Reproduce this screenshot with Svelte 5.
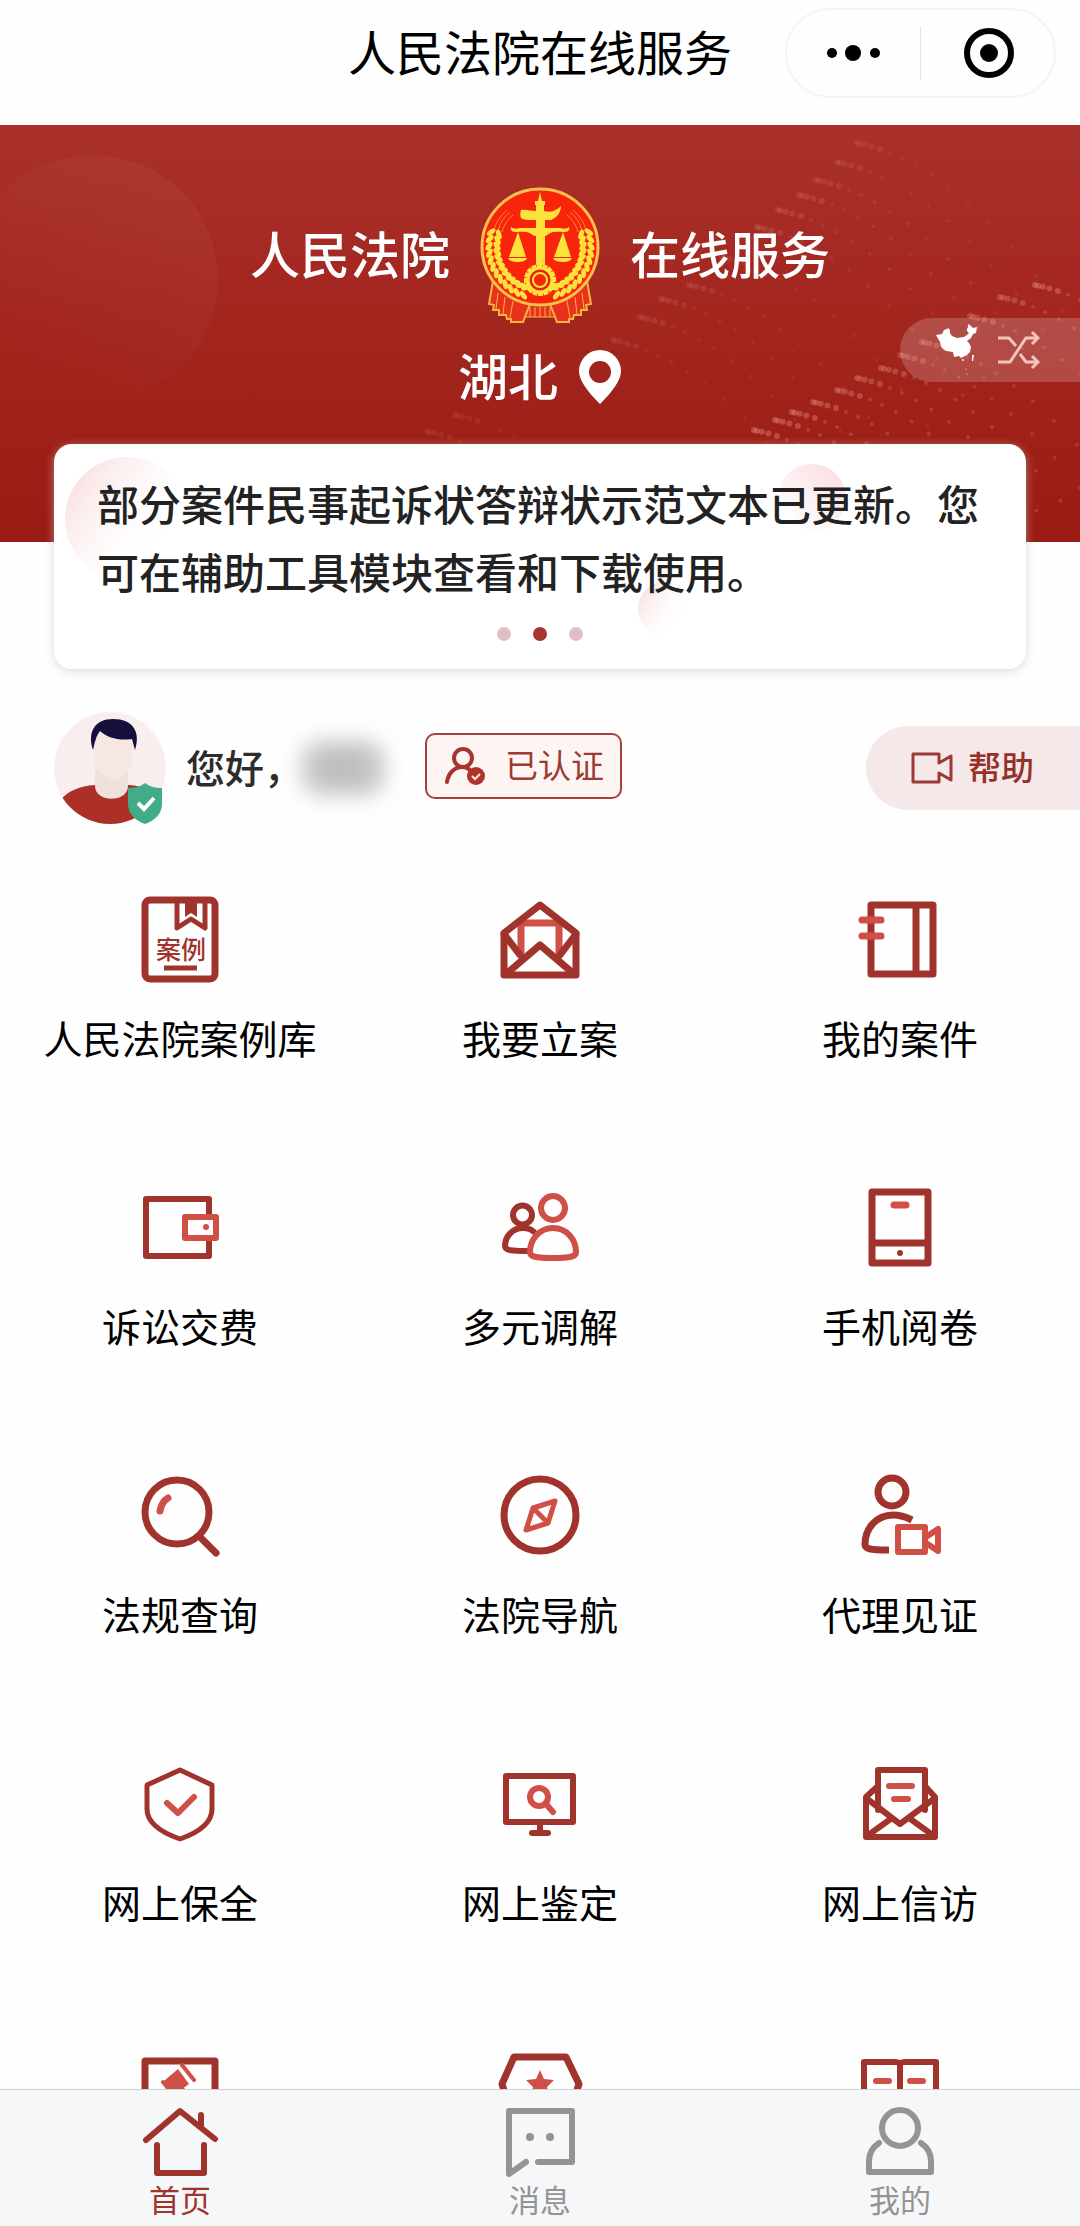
<script>
    let activeTab = 'home';
    let activeSlide = 1;

    // tone: dark strokes by default, 'light' for the accent strokes
    // solid: filled shape, back: white fill that hides what is underneath
    const services = [
        {
            label: '人民法院案例库',
            text: '案例',
            parts: [
                { d: 'M14 4h60a5 5 0 0 1 5 5v69a5 5 0 0 1-5 5H14a5 5 0 0 1-5-5V9a5 5 0 0 1 5-5z', width: 7 },
                { d: 'M41 4v28l14-9 14 9V4', width: 5 },
                { d: 'M49 4h12v17l-6-4-6 4z', solid: true },
                { d: 'M28 72h33', width: 5, flat: true }
            ]
        },
        {
            label: '我要立案',
            parts: [
                { d: 'M25 58V27h38v31', tone: 'light', width: 7 },
                { d: 'M8 79V37L44 9l36 28v42z', width: 7 },
                { d: 'M8 38l16 21M80 38L64 59M10 78l34-29 34 29', width: 7 }
            ]
        },
        {
            label: '我的案件',
            parts: [
                { d: 'M15 9h62v69H15zM60 9v69', width: 7 },
                { d: 'M6 24h19M6 40h19', tone: 'light', width: 7 }
            ]
        },
        {
            label: '诉讼交费',
            parts: [
                { d: 'M10 15h63v57H10z', width: 6 },
                { d: 'M49 33h31v21H49z', tone: 'light', width: 6, back: true },
                { d: 'M67 43a3 3 0 1 0 6 0a3 3 0 1 0-6 0', tone: 'light', solid: true }
            ]
        },
        {
            label: '多元调解',
            parts: [
                { d: 'M17 31a9.500 9.500 0 1 0 19 0a9.500 9.500 0 1 0-19 0', width: 6 },
                { d: 'M27 44c-11 0-18 9-18 18 0 4 5 5 24 5', width: 6 },
                { d: 'M27 44c4 0 8 1 11 4', width: 6 },
                { d: 'M57 44c-14 0-23 12-23 24 0 5 6 6 23 6s23-1 23-6c0-12-9-24-23-24z', tone: 'light', width: 6, back: true },
                { d: 'M45 24a12 12 0 1 0 24 0a12 12 0 1 0-24 0', tone: 'light', width: 6 }
            ]
        },
        {
            label: '手机阅卷',
            parts: [
                { d: 'M16 8h56v71H16zM16 59h56', width: 7 },
                { d: 'M38 21h12', tone: 'light', width: 7 },
                { d: 'M41 69a3 3 0 1 0 6 0a3 3 0 1 0-6 0', solid: true }
            ]
        },
        {
            label: '法规查询',
            parts: [
                { d: 'M9 40a32 32 0 1 0 64 0a32 32 0 1 0-64 0M63 64l17 17', width: 7 },
                { d: 'M32 26c-5 3-7 7-8 13', tone: 'light', width: 7 }
            ]
        },
        {
            label: '法院导航',
            parts: [
                { d: 'M8 43a36 36 0 1 0 72 0a36 36 0 1 0-72 0', width: 7 },
                { d: 'M59 29l-22 7-7 22 22-7zM37 36l15 15', tone: 'light' }
            ]
        },
        {
            label: '代理见证',
            parts: [
                { d: 'M22 20a14 14 0 1 0 28 0a14 14 0 1 0-28 0', width: 7 },
                { d: 'M56 48c-6-3-12-5-19-5C20 43 9 57 9 72c0 5 4 6 24 6', width: 7, flat: true },
                { d: 'M42 55h27v25H42zM70 65l12-8v22l-12-8', tone: 'light', width: 6 }
            ]
        },
        {
            label: '网上保全',
            parts: [
                { d: 'M44 10l32 15v24c0 13-12 23-32 30C24 72 11 62 11 49V25z' },
                { d: 'M31 43l11 10 16-16', tone: 'light', width: 6 }
            ]
        },
        {
            label: '网上鉴定',
            parts: [
                { d: 'M10 16h67v46H10z', width: 6 },
                { d: 'M44 62v10M36 73h16', width: 6 },
                { d: 'M34 37a9 9 0 1 0 18 0a9 9 0 1 0-18 0M50 44l7 8', tone: 'light', width: 6 }
            ]
        },
        {
            label: '网上信访',
            parts: [
                { d: 'M22 50V10h47v40M22 26L10 37v40h69V37L69 26M10 38l34 26 35-26M11 76l25-18M78 76L53 58', width: 6 },
                { d: 'M33 26h23M38 39h14', tone: 'light', width: 6 }
            ]
        },
        {
            name: '司法拍卖',
            parts: [
                { d: 'M9 13h70v60H9z', width: 7 },
                { d: 'M42 21l11 15-15 11-10-14z', tone: 'light', solid: true },
                { d: 'M46 17l12 15M27 34l12 15', tone: 'light', width: 4 },
                { d: 'M46 42l14 16', tone: 'light', width: 6 }
            ]
        },
        {
            name: '律师服务',
            parts: [
                { d: 'M18 9h52l13 27-13 38H18L6 36z', width: 7 },
                { d: 'M44 22l4 9 10 1-7 7 2 10-9-5-9 5 2-10-7-7 10-1z', tone: 'light', solid: true }
            ]
        },
        {
            name: '法律文库',
            parts: [
                { d: 'M44 17c0-3-2-3-5-3H8v56h36zM44 17c0-3 2-3 5-3h31v56H44z', width: 6 },
                { d: 'M20 33h13M54 33h13', tone: 'light', width: 6 }
            ]
        }
    ];

    const tabs = [
        {
            id: 'home',
            label: '首页',
            line: 'M6 34L40 5l35 28M61 9v12M17 39v28h47V39',
            dots: ''
        },
        {
            id: 'message',
            label: '消息',
            line: 'M38 56h34V5H9v63l17-12',
            dots: 'M26 31a4 4 0 1 0 8 0a4 4 0 1 0-8 0M46 31a4 4 0 1 0 8 0a4 4 0 1 0-8 0'
        },
        {
            id: 'mine',
            label: '我的',
            line: 'M22 22a18 18 0 1 0 36 0a18 18 0 1 0-36 0M19 37c-6 4-10 10-10 18v11h62V55c0-8-4-14-10-18',
            dots: ''
        }
    ];

    const slides = [0, 1, 2];

    // starting points of the dotted waves on the banner
    const waves = [
        [427, 306, 0.12], [455, 290, 0.12], [613, 215, 0.14], [640, 192, 0.16],
        [661, 174, 0.16], [689, 160, 0.16], [722, 132, 0.14], [757, 102, 0.2],
        [778, 85, 0.2], [799, 70, 0.2], [816, 55, 0.18], [837, 37, 0.16],
        [857, 18, 0.14], [754, 305, 0.42], [775, 295, 0.4], [792, 287, 0.4],
        [813, 277, 0.38], [837, 265, 0.36], [857, 253, 0.34], [881, 243, 0.34],
        [900, 230, 0.3], [922, 217, 0.3], [970, 191, 0.34], [1000, 172, 0.34],
        [1035, 160, 0.4]
    ];

    const dots = waves.flatMap(([x, y, opacity]) => {
        const row = [];
        let dx = 0;
        for (let i = 0; i < 15; i++) {
            row.push({
                x: x + dx,
                y: y + dx * dx * 0.003 + dx * 0.2,
                r: i < 5 ? 3 : 2,
                opacity: i < 5 ? opacity : opacity * 0.7
            });
            dx += 3 + i * 1.8;
        }
        return row;
    });

    // wheat ears on both sides of the emblem
    const grains = [];
    for (let a = 0; a < 12; a++) {
        const angle = 197 - a * 8;
        const rad = (angle * Math.PI) / 180;
        for (const r of [43, 51]) {
            grains.push({
                x: 60 + r * Math.cos(rad),
                y: 60 + r * Math.sin(rad),
                turn: angle + (r === 43 ? 55 : 125)
            });
        }
    }

    const teeth = Array.from({ length: 16 }, (_, i) => i * 22.5);
</script>

<div class="app">
    <header class="titlebar">
        <h1>人民法院在线服务</h1>
        <div class="capsule">
            <button aria-label="更多">
                <svg width="54" height="54" viewBox="0 0 54 54">
                    <circle cx="5" cy="27" r="5" />
                    <circle cx="26" cy="27" r="8" />
                    <circle cx="48" cy="27" r="5" />
                </svg>
            </button>
            <button aria-label="关闭">
                <svg width="54" height="54" viewBox="0 0 54 54">
                    <circle cx="28" cy="27" r="22" fill="none" stroke="#000" stroke-width="6" />
                    <circle cx="28" cy="27" r="9" />
                </svg>
            </button>
        </div>
    </header>

    <main>
        <section class="banner">
            <svg class="pattern" width="1080" height="417" viewBox="0 0 1080 417" aria-hidden="true">
                <defs>
                    <linearGradient id="orb" x1="0.9" y1="0.2" x2="0.3" y2="0.9">
                        <stop offset="0" stop-color="#fff" stop-opacity="0.04" />
                        <stop offset="1" stop-color="#fff" stop-opacity="0" />
                    </linearGradient>
                </defs>
                <ellipse cx="92" cy="154" rx="126" ry="124" fill="url(#orb)" />
                {#each dots as dot}
                    <circle cx={dot.x} cy={dot.y} r={dot.r} fill="#e58d7c" opacity={dot.opacity} />
                {/each}
            </svg>

            <div class="brand">
                <span>人民法院</span>
                <svg width="120" height="136" viewBox="0 0 120 136" role="img" aria-label="法院徽章">
                    <g fill="#e8321c" stroke="#f8b440" stroke-width="2">
                        <path d="M44 116h32v14H44z" stroke-width="1" />
                        <path d="M13 94L9 117l5 1-1 5h6v5h7l1 4h4v3h12l7-18z" />
                        <path d="M107 94l4 23-5 1 1 5h-6v5h-7l-1 4h-4v3H77l-7-18z" />
                        <path
                            d="M18 106l-2 16M25 110l-2 17M33 114l-3 17M102 106l2 16M95 110l2 17M87 114l3 17M50 120v10M55 120v10M60 120v10M65 120v10M70 120v10"
                            stroke-width="1"
                        />
                    </g>
                    <circle cx="60" cy="60" r="58" fill="#f8240c" stroke="#fbc04a" stroke-width="3" />
                    <path
                        d="M14 43c2-8 7-15 13-20M18 44c2-8 6-14 12-19M22 45c2-7 5-12 11-17M106 43c-2-8-7-15-13-20M102 44c-2-8-6-14-12-19M98 45c-2-7-5-12-11-17"
                        fill="none"
                        stroke="#f88a30"
                        stroke-width="1"
                    />
                    <g fill="#fde23c">
                        {#each grains as g}
                            <ellipse rx="5" ry="2.500" transform="translate({g.x} {g.y}) rotate({g.turn})" />
                            <ellipse rx="5" ry="2.500" transform="translate({120 - g.x} {g.y}) rotate({-g.turn})" />
                        {/each}
                        <path d="M60 5l2 9h3v4h-1v6c6 2 12 0 17-5 0 6-4 12-10 14h-6v45H56V33h-4c-4 0-8 0-11-2-1-3-1-5 0-8 5-1 10 1 15 1v-6h-1v-4h3z" />
                        <path d="M31 40c2 2 5 2 9 1h40c4 1 7 1 9-1 1 4-1 5-6 5-9-1-13 0-17 4H54c-4-4-8-5-17-4-5 0-7-1-6-5z" />
                        <path d="M38 45l8 25H29zM83 45l8 25H74zM28 71h19c-1 3-5 4-9 4s-9-1-10-4zM73 71h19c-1 3-5 4-9 4s-9-1-10-4z" />
                        {#each teeth as t}
                            <rect x="57" y="77" width="5" height="5" transform="rotate({t} 60 93)" />
                        {/each}
                    </g>
                    <circle cx="60" cy="93" r="12" fill="#e8240c" stroke="#fde23c" stroke-width="3" />
                    <circle cx="60" cy="93" r="7" fill="#f8240c" stroke="#fde23c" stroke-width="2" />
                </svg>
                <span>在线服务</span>
            </div>

            <button class="place">
                <span>湖北</span>
                <svg width="44" height="54" viewBox="0 0 44 54" fill="#fff" fill-rule="evenodd">
                    <path d="M22 0a21 21 0 0 1 21 21c0 9-8 20-21 33C9 41 1 30 1 21A21 21 0 0 1 22 0zM22 11a11 11 0 1 0 0 22 11 11 0 0 0 0-22z" />
                </svg>
            </button>

            <button class="switch" aria-label="切换地区">
                <svg width="44" height="52" viewBox="0 0 44 52" fill="#fff">
                    <path d="M0 11l6-1 2-4 3-1 1-1 2 2v3l2 3 5 2 7-1 3-2 2-2-2-2v-2l1-2V0l3 2 2 2 4-1-1 6-3 1-2 4-4 3 2 2 2 4-1 5-3 3-4 2-2 1-2-2-5 1-1-5-7-1-5-4-1-5z" />
                    <circle cx="27" cy="36" r="1" />
                    <path d="M36 31h2l-1 6h-1z" />
                    <circle cx="30" cy="45" r="0.500" />
                    <circle cx="31" cy="50" r="0.500" />
                </svg>
                <svg width="42" height="40" viewBox="0 0 42 40" fill="none" stroke="#f4c4bc" stroke-width="3">
                    <path d="M0 8h11l7 8M0 32h12L28 8h12M22 24l6 8h12M34 2l6 6-6 6M34 26l6 6-6 6" />
                </svg>
            </button>
        </section>

        <section class="notice">
            <svg class="bubbles" width="700" height="225" viewBox="0 0 700 225" aria-hidden="true">
                <defs>
                    <linearGradient id="bubbleFill" x1="0.1" y1="0.2" x2="0.8" y2="0.7">
                        <stop offset="0" stop-color="#fae3e4" />
                        <stop offset="1" stop-color="#fff" stop-opacity="0" />
                    </linearGradient>
                </defs>
                <circle cx="73" cy="75" r="62" fill="url(#bubbleFill)" />
                <circle cx="612" cy="165" r="28" fill="url(#bubbleFill)" />
            </svg>
            <span class="bubble"></span>
            <p>部分案件民事起诉状答辩状示范文本已更新。您可在辅助工具模块查看和下载使用。</p>
            <div class="pager">
                {#each slides as slide}
                    <button
                        class:active={slide === activeSlide}
                        aria-label={`第${slide + 1}条`}
                        on:click={() => (activeSlide = slide)}
                    ></button>
                {/each}
            </div>
        </section>

        <section class="user">
            <svg width="112" height="112" viewBox="0 0 112 112" role="img" aria-label="头像">
                <defs>
                    <clipPath id="face"><circle cx="56" cy="56" r="56" /></clipPath>
                </defs>
                <g clip-path="url(#face)">
                    <rect width="112" height="112" fill="#f9eeee" />
                    <path d="M7 87c8-8 18-13 34-14h34c14 1 25 6 33 14v25H7z" fill="#ac3028" />
                    <path d="M41 58h33v16c0 17-33 17-33 0z" fill="#efdfdd" />
                    <path d="M40 20h38v32c0 5-12 16-19 16s-19-11-19-16z" fill="#f6e7e3" />
                    <path d="M39 38c-6-18 2-31 20-31 20 0 28 13 22 31l-3-11c-13 2-24-1-32-8-4 5-5 11-7 19z" fill="#140f3c" />
                </g>
                <path d="M91 71c5 4 11 5 17 5v16c0 10-8 17-17 20-9-3-17-10-17-20V76c6 0 12-1 17-5z" fill="#42ab88" />
                <path d="M84 91l6 6 10-11" fill="none" stroke="#fff" stroke-width="4" />
            </svg>
            <span class="hello">您好，</span>
            <span class="masked"></span>
            <button class="verified">
                <svg width="40" height="40" viewBox="0 0 40 40">
                    <g fill="none" stroke="#a5352e" stroke-width="4" stroke-linecap="round">
                        <circle cx="18" cy="12" r="9" />
                        <path d="M2 36c1-8 7-15 15-15 3 0 6 1 8 3" />
                    </g>
                    <circle cx="31" cy="30" r="9" fill="#b0342c" />
                    <path d="M27 30l3 3 5-5" fill="none" stroke="#fbe9e4" stroke-width="2" />
                </svg>
                <span>已认证</span>
            </button>
            <button class="help">
                <svg width="42" height="32" viewBox="0 0 42 32" fill="none" stroke="#9c3a38" stroke-width="3" stroke-linejoin="round">
                    <path d="M2 2h26v9l12-7v24l-12-7v9H2z" />
                </svg>
                <span>帮助</span>
            </button>
        </section>

        <nav class="services" aria-label="服务">
            {#each services as service}
                <button aria-label={service.label ? null : service.name}>
                    <svg width="88" height="88" viewBox="0 0 88 88">
                        {#each service.parts as part}
                            <path
                                class="stroke"
                                class:light={part.tone === 'light'}
                                class:solid={part.solid}
                                class:back={part.back}
                                class:flat={part.flat}
                                stroke-width={part.width || 5}
                                d={part.d}
                            />
                        {/each}
                        {#if service.text}
                            <text x="45" y="63" text-anchor="middle">{service.text}</text>
                        {/if}
                    </svg>
                    {#if service.label}
                        <span>{service.label}</span>
                    {/if}
                </button>
            {/each}
        </nav>
    </main>

    <nav class="tabbar" aria-label="导航">
        {#each tabs as tab}
            <button class:active={activeTab === tab.id} on:click={() => (activeTab = tab.id)}>
                <svg width="80" height="72" viewBox="0 0 80 72">
                    <path
                        d={tab.line}
                        fill="none"
                        stroke="currentColor"
                        stroke-width="6"
                        stroke-linecap="round"
                        stroke-linejoin="round"
                    />
                    <path d={tab.dots} fill="currentColor" />
                </svg>
                <span>{tab.label}</span>
            </button>
        {/each}
    </nav>
</div>

<style>
    :global(body) {
        background: #fefefe;
    }

    .app {
        display: flex;
        flex-direction: column;
        height: 100vh;
        font-family: "Noto Sans CJK SC", "Noto Sans", sans-serif;
        color: #000;
    }

    button {
        padding: 0;
        border: none;
        background: none;
        font: inherit;
        color: inherit;
        cursor: pointer;
    }

    svg {
        display: block;
        flex-shrink: 0;
    }

    .titlebar {
        display: grid;
        grid-template-columns: 1fr auto 1fr;
        align-items: center;
        padding: 8px 24px 27px;
    }

    .titlebar h1 {
        grid-column: 2;
        margin: 0;
        padding-bottom: 6px;
        font-size: 48px;
        font-weight: 400;
        line-height: 64px;
    }

    .capsule {
        display: flex;
        justify-self: end;
        align-items: center;
        box-sizing: border-box;
        width: 271px;
        height: 90px;
        border: 2px solid #f5f5f5;
        border-radius: 45px;
    }

    .capsule button {
        display: flex;
        flex: 1;
        justify-content: center;
    }

    .capsule button + button {
        border-left: 1px solid #e2e2e2;
    }

    main {
        flex: 1;
        min-height: 0;
        overflow-x: hidden;
        overflow-y: auto;
        scrollbar-width: none;
    }

    .banner {
        position: relative;
        display: flex;
        flex-direction: column;
        align-items: center;
        gap: 24px;
        padding: 62px 0 135px;
        background: linear-gradient(#a93129, #a3261f 45%, #9a1b13);
        color: #fff;
        overflow: hidden;
    }

    .pattern {
        position: absolute;
        top: 0;
        right: 0;
    }

    .brand,
    .place {
        position: relative;
        display: flex;
        align-items: center;
        font-size: 50px;
        font-weight: 500;
        line-height: 54px;
    }

    .brand {
        gap: 30px;
    }

    .place {
        gap: 20px;
    }

    .brand span,
    .place span {
        padding-bottom: 6px;
    }

    .switch {
        position: absolute;
        top: 193px;
        right: 0;
        display: flex;
        align-items: center;
        gap: 18px;
        height: 64px;
        padding: 0 40px 0 36px;
        border-radius: 32px 0 0 32px;
        background: rgba(255, 255, 255, 0.18);
    }

    .notice {
        position: relative;
        margin: -98px 54px 0;
        padding: 25px 43px 28px;
        border-radius: 18px;
        background: #fff;
        box-shadow: 0 2px 10px rgba(200, 190, 190, 0.6);
    }

    .bubbles {
        position: absolute;
        top: 0;
        left: 0;
    }

    .bubble {
        position: absolute;
        top: 20px;
        right: 180px;
        width: 68px;
        height: 68px;
        border-radius: 50%;
        background: linear-gradient(220deg, #f9dcde, rgba(255, 255, 255, 0) 85%);
    }

    .notice p {
        position: relative;
        margin: 0;
        font-size: 42px;
        font-weight: 500;
        line-height: 68px;
        color: #222;
    }

    .pager {
        display: flex;
        justify-content: center;
        gap: 22px;
        margin-top: 22px;
    }

    .pager button {
        width: 14px;
        height: 14px;
        border-radius: 50%;
        background: #e0bfc5;
    }

    .pager button.active {
        background: #a5352e;
    }

    .user {
        display: flex;
        align-items: center;
        margin-top: 43px;
        padding-left: 54px;
    }

    .user span {
        padding-bottom: 4px;
    }

    .hello {
        margin-left: 20px;
        font-size: 39px;
        font-weight: 500;
        line-height: 56px;
        color: #2c2c2c;
    }

    .masked {
        width: 84px;
        height: 52px;
        margin-left: -2px;
        border-radius: 20px;
        background: radial-gradient(#b8b8b8, #d4d4d4);
        filter: blur(10px);
    }

    .verified {
        display: flex;
        align-items: center;
        gap: 20px;
        box-sizing: border-box;
        height: 66px;
        margin: 0 0 4px 40px;
        padding: 0 16px 0 18px;
        border: 2px solid #a8403c;
        border-radius: 10px;
        background: #fcf5f2;
        font-size: 33px;
        line-height: 48px;
        color: #9c3a35;
    }

    .help {
        display: flex;
        align-items: center;
        gap: 15px;
        height: 84px;
        margin-left: auto;
        padding: 0 46px 0 45px;
        border-radius: 42px 0 0 42px;
        background: #f4e8e8;
        font-size: 33px;
        font-weight: 500;
        line-height: 48px;
        color: #973029;
    }

    .services {
        display: grid;
        grid-template-columns: repeat(3, 1fr);
        row-gap: 119px;
        padding: 72px 0 40px;
    }

    .services button {
        display: flex;
        flex-direction: column;
        align-items: center;
        gap: 25px;
        font-size: 39px;
        line-height: 56px;
        white-space: nowrap;
    }

    .services text {
        font-size: 25px;
        font-weight: 500;
        fill: #a0342d;
    }

    .stroke {
        fill: none;
        stroke: #a0342d;
        stroke-linecap: round;
        stroke-linejoin: round;
    }

    .stroke.light {
        stroke: #d04f47;
    }

    .stroke.back {
        fill: #fefefe;
    }

    .stroke.flat {
        stroke-linecap: butt;
    }

    .stroke.solid {
        fill: #a0342d;
        stroke: none;
    }

    .stroke.solid.light {
        fill: #d04f47;
    }

    .tabbar {
        display: grid;
        grid-template-columns: repeat(3, 1fr);
        padding: 16px 0 9px;
        border-top: 1px solid #d0d0d0;
        background: #f6f7f9;
    }

    .tabbar button {
        display: flex;
        flex-direction: column;
        align-items: center;
        gap: 3px;
        font-size: 31px;
        line-height: 36px;
        color: #949494;
    }

    .tabbar button.active {
        color: #a0342d;
    }
</style>
